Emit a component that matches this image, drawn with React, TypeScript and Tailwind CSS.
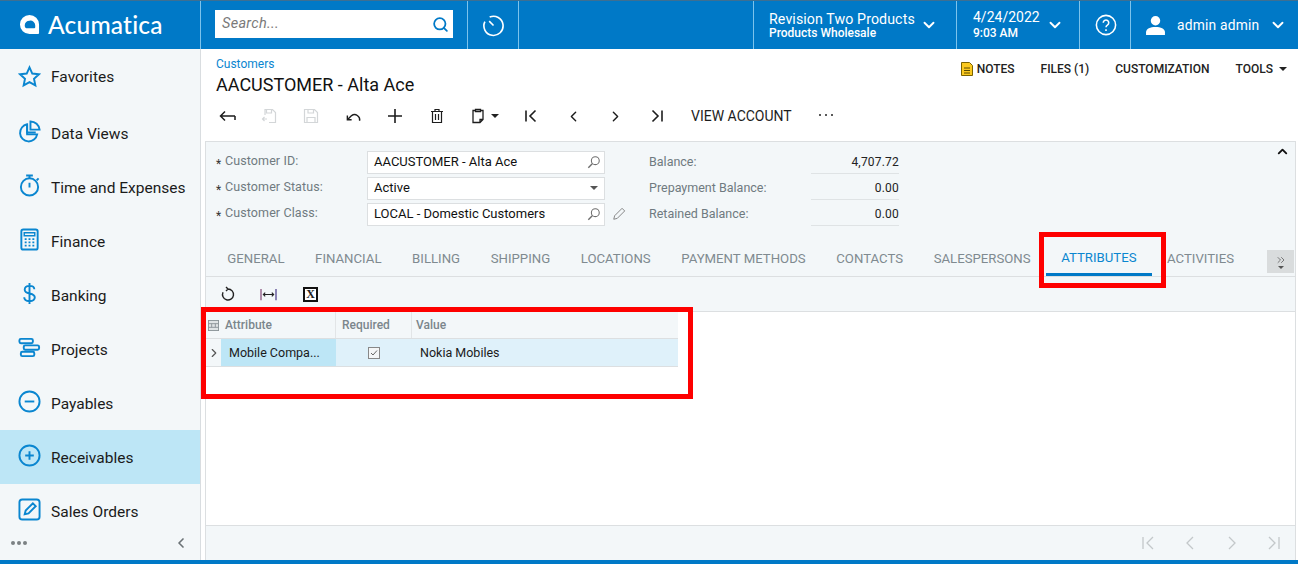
import { ReactNode } from "react";
import { ChevronDown, ChevronLeft, ChevronRight, ChevronUp, Search, ChevronsRight } from "lucide-react";

const Ico = ({ children, className = "" }: { children: ReactNode; className?: string }) => (
  <svg viewBox="0 0 24 24" fill="none" stroke="currentColor" strokeWidth="2" className={className}>
    {children}
  </svg>
);

const navItems: { label: string; h: string; active?: boolean; icon: ReactNode }[] = [
  {
    label: "Favorites",
    h: "h-[57px]",
    icon: <path d="M12 2.5l2.9 6.4 6.9.8-5.1 4.7 1.4 6.9-6.1-3.5-6.1 3.5 1.4-6.9-5.1-4.700 6.900-.8z" />,
  },
  {
    label: "Data Views",
    h: "h-[54px]",
    icon: (
      <>
        <path d="M9.5 4.500a9 9 0 1 0 10.500 10.500h-10.500z" />
        <path d="M13 1.500a9.500 9.500 0 0 1 9.500 8.500h-9.500z" />
        <path d="M9.500 5v8h9" />
      </>
    ),
  },
  {
    label: "Time and Expenses",
    h: "h-[54px]",
    icon: (
      <>
        <circle cx="12" cy="13.500" r="9" />
        <path d="M8.500 1.500h7M12 1.500v3M12 9v5M19.500 6.500l2-2" />
      </>
    ),
  },
  {
    label: "Finance",
    h: "h-[54px]",
    icon: (
      <>
        <rect x="3.500" y="1.500" width="17" height="21" rx="2" />
        <path d="M6.500 5h11v3h-11z" strokeWidth="1.500" />
        <path d="M7 11.500h2M11 11.500h2M15 11.500h2M7 15h2M11 15h2M15 15h2M7 18.500h2M11 18.500h2M15 18.500h2" strokeWidth="1.800" />
      </>
    ),
  },
  {
    label: "Banking",
    h: "h-[54px]",
    icon: <path d="M17 7.500c0-2.500-2.200-3.500-5-3.500s-5 1.200-5 4c0 5.500 10.500 2.500 10.500 8 0 2.700-2.500 4-5.500 4s-5.500-1.300-5.500-4M12 1v22" />,
  },
  {
    label: "Projects",
    h: "h-[54px]",
    icon: (
      <>
        <rect x="1.500" y="3" width="14" height="4.500" rx="1.500" />
        <rect x="6" y="9.800" width="16" height="4.500" rx="1.500" />
        <rect x="3" y="16.500" width="14" height="4.500" rx="1.500" />
      </>
    ),
  },
  {
    label: "Payables",
    h: "h-[54px]",
    icon: (
      <>
        <circle cx="12" cy="12" r="10.500" />
        <path d="M7 12h10" />
      </>
    ),
  },
  {
    label: "Receivables",
    h: "h-[54px]",
    active: true,
    icon: (
      <>
        <circle cx="12" cy="12" r="10.500" />
        <path d="M7.500 12h9M12 7.500v9" />
      </>
    ),
  },
  {
    label: "Sales Orders",
    h: "h-[54px]",
    icon: (
      <>
        <rect x="1.500" y="1.500" width="21" height="21" rx="3" />
        <path d="M7 17l1-4 7.500-7.500 3 3L11 16z" />
      </>
    ),
  },
];

const tabs = ["GENERAL", "FINANCIAL", "BILLING", "SHIPPING", "LOCATIONS", "PAYMENT METHODS", "CONTACTS", "SALESPERSONS", "ATTRIBUTES", "ACTIVITIES"];

function Lookup() {
  return (
    <svg viewBox="0 0 16 16" fill="none" stroke="#6d6d6d" strokeWidth="1.200" className="w-[14px] h-[14px]">
      <circle cx="9.500" cy="6.500" r="4.500" />
      <path d="M6 10l-4.500 4.500" strokeWidth="1.600" />
    </svg>
  );
}

function Field({ label, value, right, extra }: { label: string; value: string; right: ReactNode; extra?: boolean }) {
  return (
    <div className="flex items-center h-[26px]">
      <span className="w-[9px] ml-[10px] text-[12px] text-[#333] leading-none pt-[3px]">*</span>
      <span className="w-[142px] text-[12.500px] text-[#6f7a80] tracking-[0.100px] -mt-[2px]">{label}</span>
      <div className="w-[238px] h-[23px] bg-white border border-[#dcdfe1] flex items-center justify-between pl-[6px] pr-[3px] text-[13px] text-[#111]">
        <span>{value}</span>
        {right}
      </div>
      {extra && (
        <svg viewBox="0 0 16 16" fill="none" stroke="#777" strokeWidth="1" className="w-[14px] h-[14px] ml-[7px]">
          <path d="M2 14l1-4 8.500-8.500 3 3L6 13z" />
        </svg>
      )}
    </div>
  );
}

function Balance({ label, value }: { label: string; value: string }) {
  return (
    <div className="flex items-center h-[26px]">
      <span className="w-[162px] text-[12.500px] text-[#6f7a80]">{label}</span>
      <span className="w-[88px] h-[24px] flex items-center justify-end border-b border-[#dfe3e5] text-[12px] text-[#222] tracking-[0.200px]">{value}</span>
    </div>
  );
}

function Pager({ className = "" }: { className?: string }) {
  return (
    <div className={`flex items-center gap-[28px] text-[#c3c8ca] ${className}`}>
      <svg viewBox="0 0 14 14" fill="none" stroke="currentColor" strokeWidth="1.300" className="w-[14px] h-[14px]"><path d="M2 1v12M12 1L6 7l6 6" /></svg>
      <svg viewBox="0 0 14 14" fill="none" stroke="currentColor" strokeWidth="1.300" className="w-[14px] h-[14px]"><path d="M10 1L4 7l6 6" /></svg>
      <svg viewBox="0 0 14 14" fill="none" stroke="currentColor" strokeWidth="1.300" className="w-[14px] h-[14px]"><path d="M4 1l6 6-6 6" /></svg>
      <svg viewBox="0 0 14 14" fill="none" stroke="currentColor" strokeWidth="1.300" className="w-[14px] h-[14px]"><path d="M12 1v12M2 1l6 6-6 6" /></svg>
    </div>
  );
}

export default function App() {
  return (
    <div className="relative w-[1298px] h-[564px] overflow-hidden bg-white flex flex-col font-['Roboto','Liberation_Sans',sans-serif]">
      <div className="h-px bg-[#3d6f92]" />
      {/* top bar */}
      <header className="h-[48px] flex bg-[#0079c7] text-white divide-x divide-[#7cc3ec]">
        <div className="w-[201px] flex items-center pl-[19px] gap-[8px]">
          <svg viewBox="0 0 22 22" className="w-[21px] h-[21px] mt-[-2px]">
            <path fillRule="evenodd" fill="#fff" d="M11 1a10 10 0 0 1 10 10v9a1 1 0 0 1-1 1H11A10 10 0 0 1 11 1zm0 6a5 5 0 0 0-5 5 3 3 0 0 0 3 3h7a1 1 0 0 0 1-1v-2a5 5 0 0 0-6-5z" />
          </svg>
          <span className="text-[24.500px] font-['Lato',sans-serif] font-medium leading-none tracking-[0.200px]">Acumatica</span>
        </div>
        <div className="w-[267px] flex items-center pl-[14px]">
          <div className="w-[238px] h-[28px] -mt-[2px] bg-white flex items-center justify-between pl-[7px] pr-[4px]">
            <span className="text-[14.500px] italic text-[#7a7a7a] tracking-[0.300px]">Search...</span>
            <Search className="w-[17px] h-[17px] text-[#0079c7]" strokeWidth={2.500} />
          </div>
        </div>
        <div className="w-[51px] flex items-center justify-center">
          <svg viewBox="0 0 24 24" fill="none" stroke="#fff" strokeWidth="1.700" className="w-[23px] h-[23px]">
            <path d="M8 3.200A10 10 0 1 1 3 8" />
            <path d="M12 12L7.500 7.500" />
          </svg>
        </div>
        <div className="flex-1" />
        <div className="w-[203px] flex items-center pl-[15px]">
          <div className="w-[154px] flex flex-col">
            <span className="text-[14.200px] leading-[16px] tracking-[0.100px]">Revision Two Products</span>
            <span className="text-[12px] font-medium leading-[13px]">Products Wholesale</span>
          </div>
          <ChevronDown className="w-[18px] h-[18px] ml-[-3px]" strokeWidth={2.500} />
        </div>
        <div className="w-[123px] flex items-center pl-[16px]">
          <div className="w-[75px] flex flex-col">
            <span className="text-[14px] leading-[17px]">4/24/2022</span>
            <span className="text-[12px] font-medium leading-[15px]">9:03 AM</span>
          </div>
          <ChevronDown className="w-[18px] h-[18px] ml-[-2px]" strokeWidth={2.500} />
        </div>
        <div className="w-[51px] flex items-center justify-center pl-[2px]">
          <svg viewBox="0 0 24 24" fill="none" stroke="#fff" strokeWidth="1.700" className="w-[22px] h-[22px]">
            <circle cx="12" cy="12" r="10.500" />
            <path d="M9 9.500a3 3 0 1 1 4.500 2.600c-1 .6-1.500 1.200-1.500 2.400M12 16.500v2" />
          </svg>
        </div>
        <div className="w-[167px] flex items-center pl-[14px]">
          <svg viewBox="0 0 20 20" fill="#fff" className="w-[21px] h-[21px]">
            <circle cx="10" cy="5.500" r="4.500" />
            <path d="M1 19v-2.500C1 13 5 11.500 10 11.500s9 1.500 9 5V19z" />
          </svg>
          <span className="ml-[11px] text-[13.800px] tracking-[0.200px]">admin admin</span>
          <ChevronDown className="w-[18px] h-[18px] ml-[10px]" strokeWidth={2.500} />
        </div>
      </header>

      <div className="flex-1 flex min-h-0">
        {/* sidebar */}
        <aside className="w-[201px] shrink-0 bg-[#f3f7f9] border-r border-[#d9dde0] flex flex-col">
          {navItems.map((n, i) => (
            <div key={n.label} className={`${n.h} shrink-0 flex items-center pl-[18px] ${n.active ? "bg-[#bde6f6]" : ""}`}>
              <Ico className="w-[23px] h-[23px] text-[#0a86d0] shrink-0 -mt-[3px]">{n.icon}</Ico>
              <span className={`ml-[10px] text-[15.500px] text-[#1b1b1b] ${i > 0 ? "pt-[4px]" : ""}`}>{n.label}</span>
            </div>
          ))}
          <div className="h-[22px] shrink-0 px-[11px]">
            <div className="h-[16px] -mt-[3px] flex items-center justify-between">
              <div className="flex gap-[2px]">
                <span className="w-[4px] h-[4px] rounded-full bg-[#7b8184]" />
                <span className="w-[4px] h-[4px] rounded-full bg-[#7b8184]" />
                <span className="w-[4px] h-[4px] rounded-full bg-[#7b8184]" />
              </div>
              <ChevronLeft className="w-[16px] h-[16px] text-[#6b7276]" strokeWidth={2.500} />
            </div>
          </div>
        </aside>

        {/* content */}
        <main className="flex-1 min-w-0 flex flex-col">
          <div className="h-[92px] shrink-0 flex flex-col pl-[15px] relative">
            <div className="flex items-start justify-between pr-[11px]">
              <div className="pt-[8px]">
                <div className="text-[12px] leading-[14px] text-[#0a86d0]">Customers</div>
                <div className="text-[18px] leading-[24px] mt-[2px] text-[#111]">AACUSTOMER - Alta Ace</div>
              </div>
              <div className="flex items-center pt-[11px] text-[12px] text-[#222] font-medium">
                <svg viewBox="0 0 12 14" className="w-[12px] h-[14px] mr-[4px]">
                  <path d="M.5.500h8l3 3v10H.500z" fill="#fbc91f" stroke="#7a6200" />
                  <path d="M3 6h6M3 8.500h6M3 11h6" stroke="#5a4a00" />
                </svg>
                <span>NOTES</span>
                <span className="ml-[26px]">FILES (1)</span>
                <span className="ml-[26px]">CUSTOMIZATION</span>
                <span className="ml-[26px]">TOOLS</span>
                <span className="ml-[6px] border-x-[4px] border-x-transparent border-t-[4px] border-t-[#222]" />
              </div>
            </div>
            {/* toolbar */}
            <div className="flex items-center h-[24px] mt-[7px] -ml-[10px] text-[#1d1d1d]">
              <div className="w-[42px] flex justify-center">
                <svg viewBox="0 0 18 18" fill="none" stroke="currentColor" strokeWidth="1.500" className="w-[18px] h-[18px]"><path d="M17 9H3M7 4.500L2.500 9 7 13.500M17 9v4" /></svg>
              </div>
              <div className="w-[42px] flex justify-center">
                <svg viewBox="0 0 16 16" fill="none" stroke="#d3d6d8" strokeWidth="1.200" className="w-[16px] h-[16px]"><path d="M4 7V1.500h7.500l3 3v10H8M5.500 1.500V5h5V1.500M6 11H1.500m2-2l-2 2 2 2" /></svg>
              </div>
              <div className="w-[42px] flex justify-center">
                <svg viewBox="0 0 16 16" fill="none" stroke="#d3d6d8" strokeWidth="1.200" className="w-[16px] h-[16px]"><path d="M1.500 1.500h10l3 3v10h-13zM5 1.500V5h5.500V1.500M4 14.500V9.500h8v5" /></svg>
              </div>
              <div className="w-[42px] flex justify-center">
                <svg viewBox="0 0 18 18" fill="none" stroke="currentColor" strokeWidth="1.500" className="w-[17px] h-[17px]"><path d="M7 12.500H2.500V8M2.500 12.500L7 8a5.500 5.500 0 0 1 8.500 5.500" /></svg>
              </div>
              <div className="w-[42px] flex justify-center">
                <svg viewBox="0 0 16 16" fill="none" stroke="currentColor" strokeWidth="1.600" className="w-[16px] h-[16px]"><path d="M8 1v14M1 8h14" /></svg>
              </div>
              <div className="w-[42px] flex justify-center">
                <svg viewBox="0 0 16 16" fill="none" stroke="currentColor" strokeWidth="1.200" className="w-[16px] h-[16px]"><path d="M2 3.500h12M6 3.500V1.500h4v2M3.500 3.500v11h9v-11M6.500 6v6M9.500 6v6" /></svg>
              </div>
              <div className="w-[42px] flex items-center pl-[12px]">
                <svg viewBox="0 0 16 16" fill="none" stroke="currentColor" strokeWidth="1.300" className="w-[16px] h-[16px] shrink-0"><path d="M5.500 2.500H3v12h7l3-3v-9h-2.500M5.500 1.500h5v2h-5zM10 14.500v-3h3" /></svg>
                <span className="ml-[5px] border-x-[4px] border-x-transparent border-t-[4px] border-t-[#222]" />
              </div>
              <div className="w-[10px]" />
              <div className="w-[42px] flex justify-center"><ChevronLeftBar /></div>
              <div className="w-[42px] flex justify-center"><ChevronLeft className="w-[17px] h-[17px]" strokeWidth={2} /></div>
              <div className="w-[42px] flex justify-center"><ChevronRight className="w-[17px] h-[17px]" strokeWidth={2} /></div>
              <div className="w-[42px] flex justify-center"><ChevronRightBar /></div>
              <span className="ml-[13px] text-[14px] text-[#1d1d1d]">VIEW ACCOUNT</span>
              <div className="ml-[27px] flex gap-[4px] -mt-[2px]">
                <span className="w-[2px] h-[2px] rounded-full bg-[#222]" />
                <span className="w-[2px] h-[2px] rounded-full bg-[#222]" />
                <span className="w-[2px] h-[2px] rounded-full bg-[#222]" />
              </div>
            </div>
          </div>

          <div className="flex-1 min-h-0 ml-[4px] mr-[2px] border-l border-r border-t border-[#dcdfe1] flex flex-col">
            {/* form header */}
            <div className="h-[135px] shrink-0 bg-[#f3f7f9] border-b border-[#dcdfe1] flex flex-col relative">
              <div className="flex pt-[7px] h-[96px]">
                <div className="w-[443px] flex flex-col">
                  <Field label="Customer ID:" value="AACUSTOMER - Alta Ace" right={<Lookup />} />
                  <Field
                    label="Customer Status:"
                    value="Active"
                    right={<span className="mr-[3px] border-x-[4px] border-x-transparent border-t-[4px] border-t-[#555]" />}
                  />
                  <Field label="Customer Class:" value="LOCAL - Domestic Customers" right={<Lookup />} extra />
                </div>
                <div className="flex flex-col">
                  <Balance label="Balance:" value="4,707.72" />
                  <Balance label="Prepayment Balance:" value="0.00" />
                  <Balance label="Retained Balance:" value="0.00" />
                </div>
                <ChevronUp className="absolute right-[5px] top-[2px] w-[15px] h-[15px] text-[#111]" strokeWidth={3} />
              </div>
              <div className="flex flex-1 items-start pl-[6px]">
                {tabs.map((t) => (
                  <div
                    key={t}
                    className={`relative h-[38px] px-[15.300px] pt-[13px] text-[13.200px] leading-[16px] ${
                      t === "ATTRIBUTES" ? "text-[#0a86d0]" : "text-[#7f8a90]"
                    }`}
                  >
                    <span className={t === "ATTRIBUTES" ? "block -mt-[1px]" : ""}>{t}</span>
                    {t === "ATTRIBUTES" && <span className="absolute left-0 right-0 bottom-0 h-[3px] bg-[#0079c7]" />}
                  </div>
                ))}
                <div className="ml-auto mr-[1px] mt-[12px] w-[27px] h-[23px] bg-[#d9dcdd] flex flex-col items-center justify-center">
                  <ChevronsRight className="w-[12px] h-[12px] text-[#555]" strokeWidth={1.500} />
                  <span className="border-x-[3px] border-x-transparent border-t-[3px] border-t-[#555]" />
                </div>
              </div>
            </div>

            {/* grid toolbar */}
            <div className="h-[35px] shrink-0 bg-[#f3f7f9] border-b border-[#dcdfe1] flex items-center pl-[14px] text-[#222]">
              <svg viewBox="0 0 16 16" fill="none" stroke="currentColor" strokeWidth="1.400" className="w-[16px] h-[16px]"><path d="M8 3a5.500 5.500 0 1 1-5 3.200M8 3L6 1M8 3L6 5" /></svg>
              <svg viewBox="0 0 18 16" fill="none" stroke="currentColor" strokeWidth="1.200" className="w-[17px] h-[15px] ml-[24px]"><path d="M1 2v12" stroke="#7a3b6d" /><path d="M17 2v12" stroke="#3b2a80" /><path d="M3.500 8h11M5.500 6l-2 2 2 2M12.500 6l2 2-2 2" /></svg>
              <div className="ml-[26px] w-[15px] h-[15px] border-2 border-[#111] bg-white flex items-center justify-center text-[12px] font-bold leading-none font-['Liberation_Serif',serif]">X</div>
            </div>

            {/* grid */}
            <div className="flex-1 min-h-0 bg-white">
              <div className="w-[472px] flex h-[27px] bg-[#f3f7f9] border-b border-[#dcdfe1] text-[12px] font-medium text-[#7b868c]">
                <div className="w-[15px] flex items-center justify-center">
                  <svg viewBox="0 0 12 12" className="w-[11px] h-[11px]" fill="none" stroke="#8a9297"><rect x=".5" y=".5" width="11" height="11" fill="#dfe3e5" /><path d="M.5 4h11M.5 8h11M4 4v4M8 4v4" /></svg>
                </div>
                <div className="w-[115px] flex items-center pl-[4px] border-r border-[#e2e5e7]">Attribute</div>
                <div className="w-[76px] flex items-center pl-[6px] border-r border-[#e2e5e7]">Required</div>
                <div className="flex-1 flex items-center pl-[4px]">Value</div>
              </div>
              <div className="w-[472px] flex h-[28px] bg-[#dff1fa] border-b border-[#dcdfe1] text-[12.500px] text-[#1b1b1b]">
                <div className="w-[15px] bg-[#f3f7f9] flex items-center justify-center">
                  <ChevronRight className="w-[14px] h-[14px] text-[#555]" strokeWidth={2} />
                </div>
                <div className="w-[115px] bg-[#bde6f6] flex items-center pl-[8px] pt-[2px]">Mobile Compa...</div>
                <div className="w-[76px] flex items-center justify-center">
                  <svg viewBox="0 0 12 12" className="w-[12px] h-[12px]" fill="none" stroke="#888"><rect x=".5" y=".5" width="11" height="11" fill="#f4f6f7" /><path d="M3 6l2 2 4-4.500" stroke="#666" /></svg>
                </div>
                <div className="flex-1 flex items-center pl-[8px] pt-[2px]">Nokia Mobiles</div>
              </div>
            </div>

            {/* footer */}
            <div className="h-[35px] shrink-0 bg-[#f3f7f9] border-t border-[#dcdfe1] flex items-center justify-end pr-[14px]">
              <Pager />
            </div>
          </div>
        </main>
      </div>
      <div className="h-[4px] shrink-0 bg-[#0079c7]" />

      {/* red annotation boxes */}
      <div className="absolute left-[1039px] top-[232px] w-[127px] h-[56px] border-[5px] border-[#fe0000]" />
      <div className="absolute left-[201px] top-[307px] w-[492px] h-[92px] border-[5px] border-[#fe0000]" />
    </div>
  );
}

function ChevronLeftBar() {
  return (
    <svg viewBox="0 0 14 14" fill="none" stroke="currentColor" strokeWidth="1.600" className="w-[14px] h-[14px]">
      <path d="M2 1.500v11M11.500 1.500L6 7l5.500 5.500" />
    </svg>
  );
}

function ChevronRightBar() {
  return (
    <svg viewBox="0 0 14 14" fill="none" stroke="currentColor" strokeWidth="1.600" className="w-[14px] h-[14px]">
      <path d="M12 1.500v11M2.500 1.500L8 7l-5.500 5.500" />
    </svg>
  );
}
